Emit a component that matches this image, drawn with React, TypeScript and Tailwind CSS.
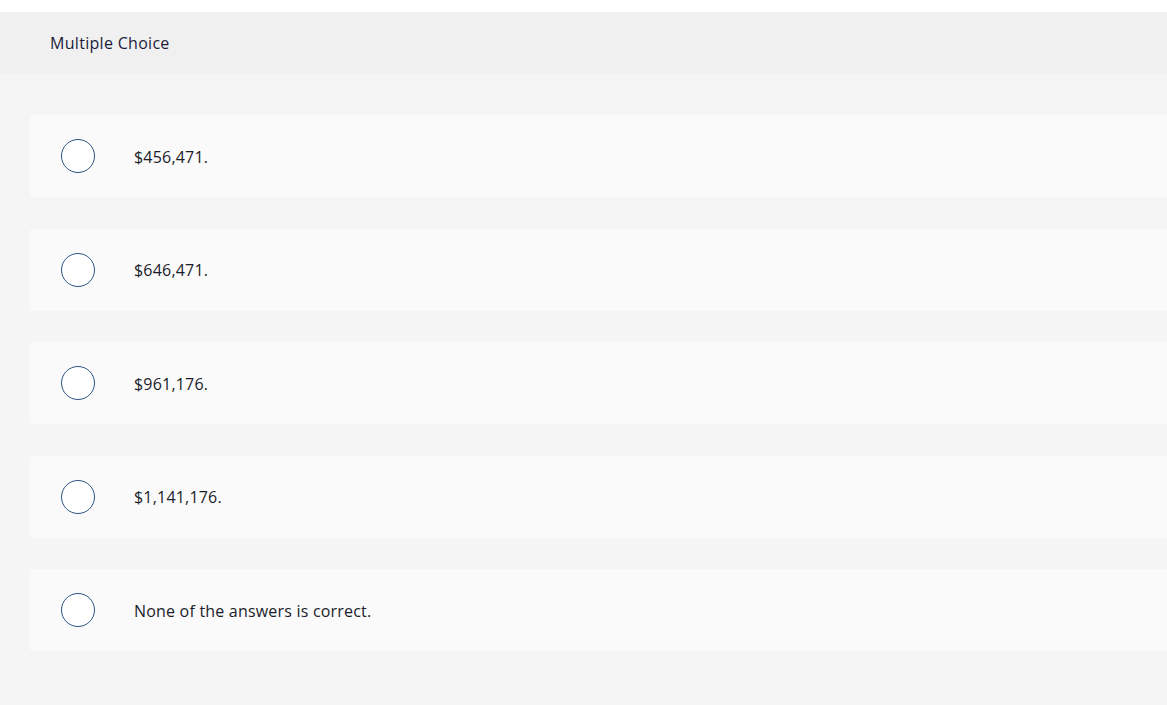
const options = [
  "$456,471.",
  "$646,471.",
  "$961,176.",
  "$1,141,176.",
  "None of the answers is correct.",
]

export default function App() {
  return (
    <div className="h-[705px] w-[1167px] overflow-hidden bg-white pt-3 font-['Open_Sans',sans-serif]">
      <div className="flex h-[62px] items-center bg-[#f0f0f0] pl-[50px] text-[16px] tracking-[0.3px] text-[#1b1d3a]">
        Multiple Choice
      </div>
      <div className="h-full bg-[#f5f5f5] pl-[30px] pt-[41px]">
        <div className="flex flex-col gap-[31.5px]">
          {options.map((o, i) => (
            <div
              key={i}
              className="-mr-2 flex h-[82px] items-center rounded-[3px] bg-[#fafafa] pl-[31px]"
            >
              <span className="h-[34px] w-[34px] shrink-0 rounded-full border-[1.5px] border-[#2b5283] bg-white" />
              <span className="ml-[39px] pt-px text-[16px] tracking-[0.2px] text-[#1b1d2a]">{o}</span>
            </div>
          ))}
        </div>
      </div>
    </div>
  )
}
